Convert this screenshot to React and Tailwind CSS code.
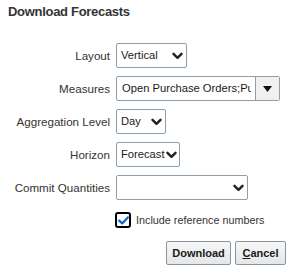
import React from "react";

const Chevron = () => (
  <svg width="11" height="8" viewBox="0 0 11 8" className="shrink-0">
    <path d="M1.5 1.8 L5.5 5.8 L9.5 1.8" fill="none" stroke="#222" strokeWidth="2.4" strokeLinecap="round" strokeLinejoin="round" />
  </svg>
);

const Select = ({ width, text }) => (
  <div
    className="h-[25px] flex items-center justify-between gap-[1px] border border-[#8f9eab] rounded-[2px] bg-white pl-[4px] pr-[3px] text-[11.2px] text-[#1a1a1a]"
    style={{ width }}
  >
    <span className="whitespace-nowrap">{text}</span>
    <Chevron />
  </div>
);

const Label = ({ children }) => (
  <div className="h-[25px] flex items-center justify-end text-[11.6px] text-[#333333] whitespace-nowrap">{children}</div>
);

export default function App() {
  return (
    <div className="w-[294px] h-[275px] bg-white pt-[4px] pl-[8px] pr-[8px]" style={{ fontFamily: '"Liberation Sans", Arial, sans-serif' }}>
      <div className="text-[13px] font-bold tracking-[-0.3px] text-[#333333] leading-[15px]">Download Forecasts</div>
      <div className="mt-[24px] grid grid-cols-[102px_auto] gap-x-[6px] gap-y-[8px]">
        <Label>Layout</Label>
        <Select width="71px" text="Vertical" />
        <Label>Measures</Label>
        <div className="h-[25px] w-[164px] flex border border-[#8f9eab] rounded-[2px] bg-white">
          <div className="flex-1 flex items-center pl-[5px] pr-[4px] min-w-0">
            <div className="overflow-hidden whitespace-nowrap text-[11.2px] text-[#1a1a1a]">Open Purchase Orders;Purchase Orders</div>
          </div>
          <div className="w-[24px] border-l border-[#8f9eab] bg-[#f0f0f0] flex items-center justify-center">
            <svg width="9" height="6" viewBox="0 0 9 6"><path d="M0 0 H9 L4.5 6 Z" fill="#111" /></svg>
          </div>
        </div>
        <Label>Aggregation Level</Label>
        <Select width="50px" text="Day" />
        <Label>Horizon</Label>
        <Select width="64px" text="Forecast" />
        <Label>Commit Quantities</Label>
        <Select width="132px" text="" />
      </div>
      <div className="mt-[12px] ml-[107px] flex items-center gap-[5px] h-[16px]">
        <div className="w-[16px] h-[16px] border-2 border-black rounded-[3px] bg-white flex items-center justify-center">
          <svg width="11" height="9" viewBox="0 0 11 9">
            <path d="M1.2 4.6 L4.2 7.4 L9.8 1.4" fill="none" stroke="#0b64cf" strokeWidth="2.2" strokeLinecap="round" strokeLinejoin="round" />
          </svg>
        </div>
        <span className="text-[10.8px] text-[#333333] whitespace-nowrap">Include reference numbers</span>
      </div>
      <div className="mt-[13px] flex justify-end gap-[4px]">
        <button className="h-[24px] w-[65px] border border-[#8a949c] rounded-[2px] bg-gradient-to-b from-[#f7f7f7] to-[#e4e6e8] text-[11px] font-bold text-[#1a1a1a]">Download</button>
        <button className="h-[24px] w-[51px] border border-[#8a949c] rounded-[2px] bg-gradient-to-b from-[#f7f7f7] to-[#e4e6e8] text-[11px] font-bold text-[#1a1a1a]"><span className="underline">C</span>ancel</button>
      </div>
    </div>
  );
}
